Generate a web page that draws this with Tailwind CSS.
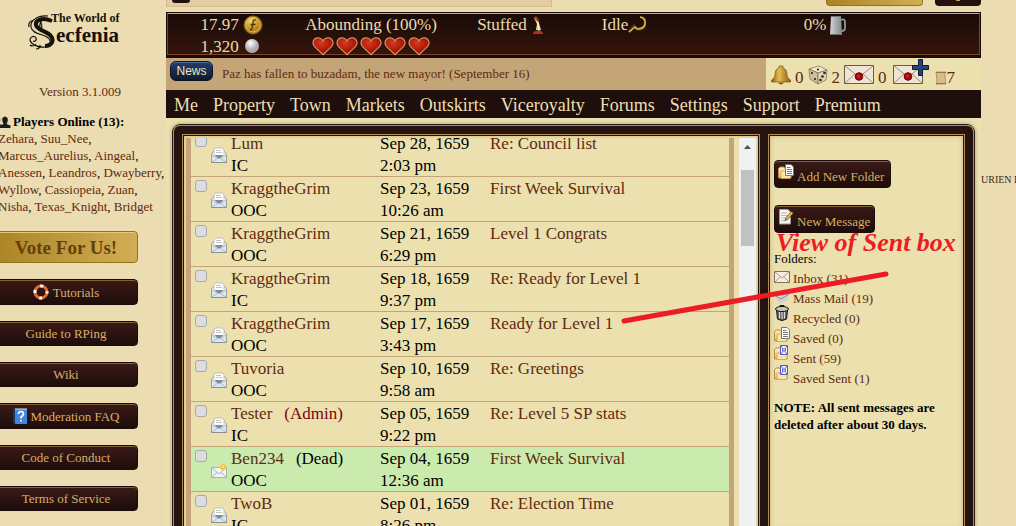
<!DOCTYPE html>
<html lang="en">
<head>
<meta charset="utf-8">
<title>The World of Secfenia - Sent Messages</title>
<script src="https://cdn.jsdelivr.net/npm/@tailwindcss/browser@4"></script>
</head>
<body class="bg-[#ebdcb1] font-['Book_Antiqua','Palatino_Linotype','Liberation_Serif',serif] text-[13px] leading-[17px] text-[#5f2a10]">
<svg class="absolute size-0" aria-hidden="true">
  <defs>
    <radialGradient id="gold" cx=".4" cy=".3"><stop offset="0" stop-color="#f4d869"/><stop offset="1" stop-color="#b4811b"/></radialGradient>
    <radialGradient id="silver" cx=".4" cy=".3"><stop offset="0" stop-color="#fff"/><stop offset="1" stop-color="#aaa"/></radialGradient>
    <radialGradient id="red" cx=".4" cy=".3"><stop offset="0" stop-color="#d8381f"/><stop offset="1" stop-color="#a81809"/></radialGradient>
    <linearGradient id="brass"><stop offset="0" stop-color="#8a5a14"/><stop offset=".4" stop-color="#e8bc50"/><stop offset="1" stop-color="#8a5a14"/></linearGradient>
    <linearGradient id="steel"><stop offset="0" stop-color="#d5d5d5"/><stop offset=".5" stop-color="#a9abad"/><stop offset="1" stop-color="#868a8c"/></linearGradient>
    <linearGradient id="folder" x2="0" y2="1"><stop offset="0" stop-color="#fff3c4"/><stop offset="1" stop-color="#e6b85c"/></linearGradient>
  </defs>
  <symbol id="heart" viewBox="0 0 24 21"><path d="M12 20 3 11.500C-1 7 2 1.500 6.500 1.500c2.500 0 4.500 1.300 5.500 3.500 1-2.200 3-3.500 5.500-3.500C22 1.500 25 7 21 11.500z" fill="url(#red)" stroke="#d99a6a" stroke-width="1.200"/></symbol>
  <symbol id="opened" viewBox="0 0 16 16"><path d="M.5 7 2.500 4.500h11l2 2.500v8.500H.5z" fill="#f4f4f4" stroke="#a0a096"/><path d="M3 10V2.500L5 1h6l2 1.500V10z" fill="#fff" stroke="#b5b5ae" stroke-width=".8"/><path d="M5 3.500h5M5 5.500h6" stroke="#c4c4c4"/><path d="M1 8h14v7H1z" fill="#dbe7f3"/><path d="M3.500 8h9L9.500 11h-3z" fill="#858b90"/><path d="m1 8 5.500 3.500L1 15M15 8l-5.500 3.500L15 15M6.500 11.500h3" fill="none" stroke="#9fb4c8" stroke-width=".8"/><path d="M.5 15.500h15" stroke="#8f8f8a"/></symbol>
  <symbol id="unread" viewBox="0 0 16 16"><path d="M.5 5.500h15v10H.5z" fill="#eef3f8" stroke="#a9b5a5"/><path d="m1 6 7 6 7-6M1 15l5-4.500m9 4.500-5-4.500" fill="none" stroke="#a4b5c5"/><circle cx="12" cy="5" r="3" fill="#fbb72a" stroke="#e8d77c"/><circle cx="12" cy="4.500" r="1.500" fill="#ffe36a"/></symbol>
  <symbol id="sealed" viewBox="0 0 30 20"><path d="M.5.5h29v18H.5z" fill="#efe5d5" stroke="#6e5a4a"/><path d="m1 1 14 11L29 1M1 18l10-9m18 9L19 9" fill="none" stroke="#a08c7c"/><circle cx="15" cy="11.500" r="3.800" fill="#a30b0b" stroke="#6a0606"/><circle cx="14.500" cy="11" r="1.300" fill="#d12a22"/></symbol>
  <symbol id="docfolder" viewBox="0 0 16 16"><path d="M.5 14V4.500L2 3h4l1 1.500h6v9.500z" fill="url(#folder)" stroke="#b88a3c"/><path d="M3 14.500V7h10v6l-1 1.500z" fill="#fae6a4" stroke="#c99c4c" stroke-width=".7"/><path d="M7.500.5H13l2.500 2.500v8.500h-8z" fill="#fff" stroke="#77776f"/><path d="M9 3.500h3.500M9 5.500h5M9 7.500h5M9 9.500h5" stroke="#777"/></symbol>
  <symbol id="sentfolder" viewBox="0 0 16 16"><path d="M.5 14V4.500L2 3h4l1 1.500h6v9.500z" fill="url(#folder)" stroke="#b88a3c"/><path d="M3 14.500V8h10v5l-1 1.500z" fill="#fae6a4" stroke="#c99c4c" stroke-width=".7"/><path d="M6.500.5h7v9h-7z" fill="#fff" stroke="#5556c8"/><path d="m7 1 3 3.500L13 1M7 9l3-3.500L13 9M8.500 3.500v3m3-3v3" fill="none" stroke="#5c5dd0"/></symbol>
</svg>

<div class="relative flex h-screen overflow-hidden">
  <aside class="-ml-1.5 flex w-[172px] shrink-0 flex-col">
    <a href="#" class="relative ml-[34px] mt-2.5 flex h-10 text-[#17120c]" aria-label="The World of Secfenia">
      <svg class="absolute left-0 top-1 h-9 w-7" viewBox="0 0 28 36" fill="none" stroke="#17120c" stroke-width="1.200" aria-hidden="true"><path d="M20 2C9 1 2 7 3 13s9 7 14 9c7 3 7 10 0 11-7 1-14-3-15-7 0-3 4-5 6-2 1 2-1 4-3 3M1 13c-1-4 2-7 4-6M8 30c-2 3-5 2-6 1M12 31c0 3-2 4-4 4"/><path d="M24 7C14 3 7 6 8 11s10 6 14 10c5 5 2 11-5 11" stroke-width="4"/><path d="M10 5c3 3 5 7 3 10M16 5c-3 2-5 5-4 9"/></svg>
      <span class="flex flex-col font-bold" aria-hidden="true">
        <span class="pl-[23px] text-xs leading-4">The World of</span>
        <span class="pl-7 text-[21px] leading-[18px]">ecfenia</span>
      </span>
    </a>
    <p class="mt-[33px] pl-[45px]">Version 3.1.009</p>
    <section class="mt-[13px] whitespace-nowrap pl-1 text-black">
      <h2 class="flex items-center gap-0.5 font-bold"><svg class="-ml-1 h-3 w-[17px]" viewBox="0 0 17 12" aria-hidden="true"><path d="M0 12V9l3-1.500Q1 5 1.500 2.500 3.500-.5 6 2q1 3-1 5.500L8 9v3z" fill="#444"/><path d="M6 12V9.500L9.500 8Q7.500 4 8.500 2q2.500-3 5 0 1 3-1 6l4 1.500V12z" fill="#1c1c1c"/></svg>Players Online (13):</h2>
      <p><a href="#" class="text-[#5f2a10]">Zehara</a>, <a href="#" class="text-[#5f2a10]">Suu_Nee</a>,<br>
      <a href="#" class="text-[#5f2a10]">Marcus_Aurelius</a>, <a href="#" class="text-[#5f2a10]">Aingeal</a>,<br>
      <a href="#" class="text-[#5f2a10]">Anessen</a>, <a href="#" class="text-[#5f2a10]">Leandros</a>, <a href="#" class="text-[#5f2a10]">Dwayberry</a>,<br>
      <a href="#" class="text-[#5f2a10]">Wyllow</a>, <a href="#" class="text-[#5f2a10]">Cassiopeia</a>, <a href="#" class="text-[#5f2a10]">Zuan</a>,<br>
      <a href="#" class="text-[#5f2a10]">Nisha</a>, <a href="#" class="text-[#5f2a10]">Texas_Knight</a>, <a href="#" class="text-[#5f2a10]">Bridget</a></p>
    </section>
    <nav class="mr-7 mt-4 flex flex-col gap-4 text-[#d9ae67]" aria-label="Guides">
      <a href="#" class="flex h-8 items-center justify-center rounded border border-[#96701d] bg-linear-to-r from-[#ab8423] to-[#d1ae55] text-[19px] font-bold text-[#644008] shadow-[inset_0_1px_#e5c878]">Vote For Us!</a>
      <a href="#" class="flex h-[26px] items-center justify-center gap-1 rounded border border-[#1c0b09] bg-linear-to-b from-[#3b1a17] to-[#1d0d0b] shadow-[inset_0_1px_#81603d]"><svg class="size-4" viewBox="0 0 16 16" aria-hidden="true"><circle cx="8" cy="8" r="6" fill="none" stroke="#e8692c" stroke-width="3"/><circle cx="8" cy="8" r="6" fill="none" stroke="#fff" stroke-width="3" stroke-dasharray="3 6.425" stroke-dashoffset="1.500"/></svg>Tutorials</a>
      <a href="#" class="flex h-[25px] items-center justify-center rounded border border-[#1c0b09] bg-linear-to-b from-[#3b1a17] to-[#1d0d0b] shadow-[inset_0_1px_#81603d]">Guide to RPing</a>
      <a href="#" class="flex h-[25px] items-center justify-center rounded border border-[#1c0b09] bg-linear-to-b from-[#3b1a17] to-[#1d0d0b] shadow-[inset_0_1px_#81603d]">Wiki</a>
      <a href="#" class="flex h-[26px] items-center justify-center gap-1 rounded border border-[#1c0b09] bg-linear-to-b from-[#3b1a17] to-[#1d0d0b] shadow-[inset_0_1px_#81603d]"><svg class="h-4 w-[14px]" viewBox="0 0 14 16" aria-hidden="true"><path d="M0 1 2 0v15H0z" fill="#173867"/><path d="M2 1h12v15H2z" fill="#4186dc"/><path d="M2 1h12" stroke="#cfe3fa"/><path d="M5.500 6q0-2.500 2.500-2.500T10.500 6q0 1.500-2.500 3v1.500M8 12v1.500" fill="none" stroke="#fff" stroke-width="1.700"/></svg>Moderation FAQ</a>
      <a href="#" class="flex h-[25px] items-center justify-center rounded border border-[#1c0b09] bg-linear-to-b from-[#3b1a17] to-[#1d0d0b] shadow-[inset_0_1px_#81603d]">Code of Conduct</a>
      <a href="#" class="flex h-[25px] items-center justify-center rounded border border-[#1c0b09] bg-linear-to-b from-[#3b1a17] to-[#1d0d0b] shadow-[inset_0_1px_#81603d]">Terms of Service</a>
    </nav>
  </aside>

  <main class="flex min-w-0 flex-1 flex-col">
    <div class="flex h-3 items-start">
      <div class="h-[7px] w-[386px] border border-t-0 border-[#d8bc8c] bg-[#e3cba5] pl-[5px]"><div class="h-[3px] w-[18px] rounded-b bg-[#20100d]"></div></div>
      <div class="ml-auto h-1.5 w-[97px] rounded-b border border-t-0 border-[#96701d] bg-linear-to-r from-[#ab8423] to-[#d1ae55]"></div>
      <div class="ml-3 flex h-1.5 w-[46px] justify-center rounded-b bg-[#24100e]"><div class="h-px w-1 bg-[#c8a060]"></div></div>
    </div>

    <header class="h-[46px] border border-b-3 border-[#1c0a07] bg-[#1c0a07] text-[17px] leading-[22px] text-[#eadcb0]">
      <div class="grid h-[42px] grid-cols-[127px_152px_126px_102px_1fr] border border-[#7a4327] border-t-[#c9a878] bg-linear-to-b from-[#190b07] to-[#35150c] pr-1 text-center">
        <div class="flex flex-col">
          <span class="flex items-center justify-center gap-1">17.97 <svg class="size-5" viewBox="0 0 20 20" aria-hidden="true"><circle cx="10" cy="10" r="9" fill="url(#gold)" stroke="#8a6418"/><circle cx="10" cy="10" r="7" fill="none" stroke="#e8c858" stroke-width=".8"/><path d="M13 5q-3-1-3 3l-1 5q0 2-2 2M7.500 9.500h5" fill="none" stroke="#4a3208" stroke-width="1.300"/></svg></span>
          <span class="flex items-center justify-center gap-1">1,320 <svg class="h-4 w-5" viewBox="0 0 20 16" aria-hidden="true"><circle cx="9" cy="7" r="7" fill="url(#silver)"/></svg></span>
        </div>
        <div>
          <div>Abounding (100%)</div>
          <div class="flex justify-center gap-0.5"><svg class="h-5 w-[22px]"><use href="#heart"/></svg><svg class="h-5 w-[22px]"><use href="#heart"/></svg><svg class="h-5 w-[22px]"><use href="#heart"/></svg><svg class="h-5 w-[22px]"><use href="#heart"/></svg><svg class="h-5 w-[22px]"><use href="#heart"/></svg></div>
        </div>
        <div class="flex h-[22px] items-center justify-center gap-1.5">Stuffed <svg class="h-[18px] w-[10px]" viewBox="0 0 10 18" aria-hidden="true"><path d="M1 2q3-3 4 2l3 10H3L4 8z" fill="#f2da88"/><path d="m1 2 2-2 3 4-1 2zM0 17l2-2h6l2 2v1H0z" fill="#b5301a"/><path d="m5 6 1 9" stroke="#fff6c5"/></svg></div>
        <div class="flex h-[22px] items-center justify-center">Idle<svg class="h-[18px] w-[18px]" viewBox="0 0 18 18" aria-hidden="true"><path d="M12 1q6 1 5 7-1 6-8 5l-3-3-5 6" fill="none" stroke="#4b370b" stroke-width="3"/><path d="M12 1q6 1 5 7-1 5-8 5l-2-2-6 5" fill="none" stroke="#d9b94c" stroke-width="1.600"/></svg></div>
        <div class="flex h-[22px] items-center justify-center gap-1">0% <svg class="h-[21px] w-4" viewBox="0 0 16 21" aria-hidden="true"><path d="M11 5q4-2 4 2v6q0 3-4 3" fill="none" stroke="#8f9b94" stroke-width="1.800"/><path d="M1 1h10l1 19H0z" fill="url(#steel)"/><path d="M1 1.500h10M0 19.500h12" stroke="#6f7374"/></svg></div>
      </div>
    </header>

    <div class="flex h-8 bg-[#c4a578]">
      <div class="flex flex-1 items-start gap-[9px] pl-1 pt-[3px]">
        <button type="button" class="h-5 w-[43px] rounded-md border border-[#0c1326] bg-linear-to-b from-[#233f6d] to-[#0f1a30] font-['Liberation_Sans',sans-serif] text-xs leading-4 text-[#eee3bd] shadow-[inset_0_1px_#4c6ca0]">News</button>
        <a href="#" class="pt-1">Paz has fallen to buzadam, the new mayor! (September 16)</a>
      </div>
      <div class="flex w-[215px] items-end bg-[#ebe0ae] pb-[5px] pl-[5px] text-[17px] leading-[14px]">
        <a href="#" class="flex items-end gap-1"><svg class="size-5" viewBox="0 0 20 20" aria-label="Notifications"><path d="M8 3V1h4v2q4 1 4 7 0 3 3.500 5v2H.5v-2Q4 13 4 10q0-6 4-7z" fill="url(#brass)" stroke="#7d5415" stroke-width=".7"/><path d="M7 17.500h6q-1 2-3 2t-3-2z" fill="#8a5a14"/></svg>0</a>
        <a href="#" class="ml-1 flex items-end gap-1"><svg class="size-5" viewBox="0 0 20 20" aria-label="Rolls"><path d="m1 4 10-3 8 4-9 3z" fill="#f2ead2" stroke="#75694f" stroke-width=".7"/><path d="m1 4 9 4v11l-8-5z" fill="#cfc09a" stroke="#75694f" stroke-width=".7"/><path d="m10 8 9-3-1 10-8 4z" fill="#e3d7b4" stroke="#75694f" stroke-width=".7"/><g fill="#27221a"><circle cx="10" cy="4.500" r="1.100"/><circle cx="12.500" cy="15" r="1.300"/><circle cx="14.500" cy="11.500" r="1.300"/><circle cx="16.500" cy="8" r="1.300"/><circle cx="4" cy="8" r="1.100"/><circle cx="7" cy="14" r="1.100"/></g></svg>2</a>
        <a href="#" class="ml-1 flex items-end gap-1"><svg class="h-5 w-[30px]" aria-label="Messages"><use href="#sealed"/></svg>0</a>
        <a href="#" class="relative ml-1.5" aria-label="New message"><svg class="h-5 w-[30px]"><use href="#sealed"/></svg><svg class="absolute -top-1.5 left-[19px] size-[17px]" viewBox="0 0 17 17"><path d="M6.500.5h4v6h6v4h-6v6h-4v-6h-6v-4h6z" fill="#25447c" stroke="#0d1730"/></svg></a>
        <a href="#" class="ml-3 flex items-end"><svg class="h-[14px] w-3" viewBox="0 0 12 14" aria-label="Scrolls"><path d="M1 1h10l-1 2 .5 8 .5 2H1l1-3-.5-6z" fill="#d8bd88" stroke="#a5865a" stroke-width=".8"/><path d="M1 1.500h10M1 12.500h10" stroke="#96774d"/></svg>7</a>
      </div>
    </div>

    <nav class="flex h-7 shrink-0 items-center gap-[15px] bg-[#1e0f0c] pl-2 pt-0.5 text-lg leading-6 text-[#eddfb3]" aria-label="Main">
      <a href="#">Me</a><a href="#">Property</a><a href="#">Town</a><a href="#">Markets</a><a href="#">Outskirts</a><a href="#">Viceroyalty</a><a href="#">Forums</a><a href="#">Settings</a><a href="#">Support</a><a href="#">Premium</a>
    </nav>

    <div class="flex min-h-0 flex-1 bg-[#ebe1b2] px-1.5 pt-1.5">
      <div class="-mb-4 flex min-w-0 flex-1 rounded-lg border border-[#2a1a12] shadow-[0_0_4px_#a99c70]">
        <div class="flex min-w-0 flex-1 gap-2 rounded-[7px] border border-[#b58a55] bg-[#24130e] p-2">
          <section class="flex min-w-0 flex-1 border border-[#b58a55]" aria-label="Sent messages">
            <div class="flex min-w-0 flex-1 overflow-hidden border border-[#24130e] bg-[#ebe0ae] p-0.5 shadow-[inset_0_0_4px_#c0b486]">
              <div class="mr-[5px] min-w-0 flex-1 overflow-hidden border-x-[5px] border-[#c4a578]">
                <table class="-mt-1.5 w-full table-fixed border-collapse text-left text-[17px] leading-[22px] text-black">
                  <colgroup><col class="w-5"><col class="w-5"><col class="w-[149px]"><col class="w-[110px]"><col></colgroup>
                  <tbody class="align-top [&_td]:pt-px [&_tr]:h-[45px] [&_tr]:shadow-[inset_0_-1px_#c4a578]">
                    <tr><td><input type="checkbox" aria-label="Select Lum" class="ml-1 mt-0.5 block size-3 appearance-none rounded-[3px] border border-[#a9a9a9] bg-[#dddddd]"></td><td><svg class="mt-3.5 size-4"><use href="#opened"/></svg></td><td><a href="#" class="text-[#5f2a10]">Lum</a><br>IC</td><td>Sep 28, 1659<br>2:03 pm</td><td><a href="#" class="text-[#5f2a10]">Re: Council list</a></td></tr>
                    <tr><td><input type="checkbox" aria-label="Select KraggtheGrim, Sep 23" class="ml-1 mt-0.5 block size-3 appearance-none rounded-[3px] border border-[#a9a9a9] bg-[#dddddd]"></td><td><svg class="mt-3.5 size-4"><use href="#opened"/></svg></td><td><a href="#" class="text-[#5f2a10]">KraggtheGrim</a><br>OOC</td><td>Sep 23, 1659<br>10:26 am</td><td><a href="#" class="text-[#5f2a10]">First Week Survival</a></td></tr>
                    <tr><td><input type="checkbox" aria-label="Select KraggtheGrim, Sep 21" class="ml-1 mt-0.5 block size-3 appearance-none rounded-[3px] border border-[#a9a9a9] bg-[#dddddd]"></td><td><svg class="mt-3.5 size-4"><use href="#opened"/></svg></td><td><a href="#" class="text-[#5f2a10]">KraggtheGrim</a><br>OOC</td><td>Sep 21, 1659<br>6:29 pm</td><td><a href="#" class="text-[#5f2a10]">Level 1 Congrats</a></td></tr>
                    <tr><td><input type="checkbox" aria-label="Select KraggtheGrim, Sep 18" class="ml-1 mt-0.5 block size-3 appearance-none rounded-[3px] border border-[#a9a9a9] bg-[#dddddd]"></td><td><svg class="mt-3.5 size-4"><use href="#opened"/></svg></td><td><a href="#" class="text-[#5f2a10]">KraggtheGrim</a><br>IC</td><td>Sep 18, 1659<br>9:37 pm</td><td><a href="#" class="text-[#5f2a10]">Re: Ready for Level 1</a></td></tr>
                    <tr><td><input type="checkbox" aria-label="Select KraggtheGrim, Sep 17" class="ml-1 mt-0.5 block size-3 appearance-none rounded-[3px] border border-[#a9a9a9] bg-[#dddddd]"></td><td><svg class="mt-3.5 size-4"><use href="#opened"/></svg></td><td><a href="#" class="text-[#5f2a10]">KraggtheGrim</a><br>OOC</td><td>Sep 17, 1659<br>3:43 pm</td><td><a href="#" class="text-[#5f2a10]">Ready for Level 1</a></td></tr>
                    <tr><td><input type="checkbox" aria-label="Select Tuvoria" class="ml-1 mt-0.5 block size-3 appearance-none rounded-[3px] border border-[#a9a9a9] bg-[#dddddd]"></td><td><svg class="mt-3.5 size-4"><use href="#opened"/></svg></td><td><a href="#" class="text-[#5f2a10]">Tuvoria</a><br>OOC</td><td>Sep 10, 1659<br>9:58 am</td><td><a href="#" class="text-[#5f2a10]">Re: Greetings</a></td></tr>
                    <tr><td><input type="checkbox" aria-label="Select Tester" class="ml-1 mt-0.5 block size-3 appearance-none rounded-[3px] border border-[#a9a9a9] bg-[#dddddd]"></td><td><svg class="mt-3.5 size-4"><use href="#opened"/></svg></td><td><a href="#" class="text-[#5f2a10]">Tester</a><span class="ml-3 text-[#7d0010]">(Admin)</span><br>IC</td><td>Sep 05, 1659<br>9:22 pm</td><td><a href="#" class="text-[#5f2a10]">Re: Level 5 SP stats</a></td></tr>
                    <tr class="bg-[#cbebae]"><td><input type="checkbox" aria-label="Select Ben234" class="ml-1 mt-0.5 block size-3 appearance-none rounded-[3px] border border-[#a9a9a9] bg-[#dddddd]"></td><td><svg class="mt-3.5 size-4"><use href="#unread"/></svg></td><td><a href="#" class="text-[#5f2a10]">Ben234</a><span class="ml-3">(Dead)</span><br>OOC</td><td>Sep 04, 1659<br>12:36 am</td><td><a href="#" class="text-[#5f2a10]">First Week Survival</a></td></tr>
                    <tr><td><input type="checkbox" aria-label="Select TwoB" class="ml-1 mt-0.5 block size-3 appearance-none rounded-[3px] border border-[#a9a9a9] bg-[#dddddd]"></td><td><svg class="mt-3.5 size-4"><use href="#opened"/></svg></td><td><a href="#" class="text-[#5f2a10]">TwoB</a><br>IC</td><td>Sep 01, 1659<br>8:26 pm</td><td><a href="#" class="text-[#5f2a10]">Re: Election Time</a></td></tr>
                  </tbody>
                </table>
              </div>
              <div class="flex w-[17px] flex-col items-center bg-[#f1f1f1]" aria-hidden="true">
                <svg class="mt-[7px] h-1 w-[7px]" viewBox="0 0 7 4"><path d="M0 4 3.500 0 7 4z" fill="#505050"/></svg>
                <div class="mt-[21px] h-[76px] w-[13px] bg-[#c1c1c1]"></div>
              </div>
            </div>
          </section>

          <section class="flex w-[197px] shrink-0 border border-[#b58a55]" aria-label="Folders">
            <div class="flex-1 overflow-hidden border border-[#24130e] bg-[#ebe0ae] pl-1 pt-6 shadow-[inset_0_0_5px_#c0b486]">
              <button type="button" class="flex h-7 w-[117px] items-center gap-[3px] whitespace-nowrap rounded border border-[#1c0b09] bg-linear-to-b from-[#3b1a17] to-[#1d0d0b] pl-[3px] text-[#d9ae67] shadow-[inset_0_1px_#81603d]"><svg class="-mt-1 size-4"><use href="#docfolder"/></svg><span class="pt-1">Add New Folder</span></button>
              <button type="button" class="mt-[17px] flex h-7 w-[101px] items-center gap-[3px] whitespace-nowrap rounded border border-[#1c0b09] bg-linear-to-b from-[#3b1a17] to-[#1d0d0b] pl-[3px] text-[#d9ae67] shadow-[inset_0_1px_#81603d]"><svg class="-mt-1 size-4" viewBox="0 0 16 16"><path d="M1.500.5H10l2.500 2.500v12h-11z" fill="#f4f4f4" stroke="#9a9a9a"/><path d="M3 4h6M3 6.500h6M3 9h4M3 11.500h4" stroke="#bbb"/><path d="m7 11.500 1-3 5.500-6 2 1.500-6 6.500z" fill="#f4c22e" stroke="#3a2a0a" stroke-width=".7"/></svg><span class="pt-1">New Message</span></button>
              <h2 class="mt-[17px] text-black">Folders:</h2>
              <ul class="mt-0.5 leading-5">
                <li><a href="#" class="flex gap-[3px]"><svg class="mt-0.5 h-3 w-4" viewBox="0 0 16 12"><path d="M.5.5h15v11H.5z" fill="#f5ecd9" stroke="#85705f"/><path d="m1 1 7 6 7-6M1 11l5-5m9 5-5-5" fill="none" stroke="#ad9886"/></svg>Inbox (31)</a></li>
                <li><a href="#" class="flex gap-[3px]"><svg class="size-4" viewBox="0 0 16 16"><path d="m0 6 10-3 5 2-2 7-8 3z" fill="#d2d2d2"/><path d="m0 6 7 4 8-5" fill="none" stroke="#888"/></svg>Mass Mail (19)</a></li>
                <li><a href="#" class="flex gap-[3px]"><svg class="-mt-1 size-4" viewBox="0 0 16 16"><path d="M2.500 5h11l-1 9q-4.500 3-9 0z" fill="#6a6a62" stroke="#111"/><path d="M5.500 7v6.500M8 7v7m2.500-7v6.500" stroke="#ddd"/><ellipse cx="8" cy="4" rx="6.500" ry="2.500" fill="#c9c9c0" stroke="#111"/><path d="M6 2V.5h4V2" fill="none" stroke="#111"/></svg>Recycled (0)</a></li>
                <li><a href="#" class="flex gap-[3px]"><svg class="-mt-0.5 size-4"><use href="#docfolder"/></svg>Saved (0)</a></li>
                <li><a href="#" class="flex gap-[3px]"><svg class="-mt-1 size-4"><use href="#sentfolder"/></svg>Sent (59)</a></li>
                <li><a href="#" class="flex gap-[3px]"><svg class="-mt-1 size-4"><use href="#sentfolder"/></svg>Saved Sent (1)</a></li>
              </ul>
              <p class="mt-2.5 w-[175px] font-bold text-black">NOTE: All sent messages are deleted after about 30 days.</p>
            </div>
          </section>
        </div>
      </div>
    </div>
  </main>

  <div class="w-[35px] shrink-0 overflow-hidden whitespace-nowrap pt-[171px] text-[10px] text-[#3b2a22]">URIEN D</div>

  <div class="pointer-events-none absolute right-0 top-0 h-full w-[400px]">
    <p class="absolute left-40 top-[227px] whitespace-nowrap text-[26px] font-bold italic leading-8 text-[#ed1c24]">View of Sent box</p>
    <svg class="absolute left-0 top-[264px] h-[66px] w-[280px]" viewBox="0 0 280 66" aria-hidden="true"><path d="M8 57 270 10" stroke="#ed1c24" stroke-width="5" stroke-linecap="round"/></svg>
  </div>
</div>
</body>
</html>
